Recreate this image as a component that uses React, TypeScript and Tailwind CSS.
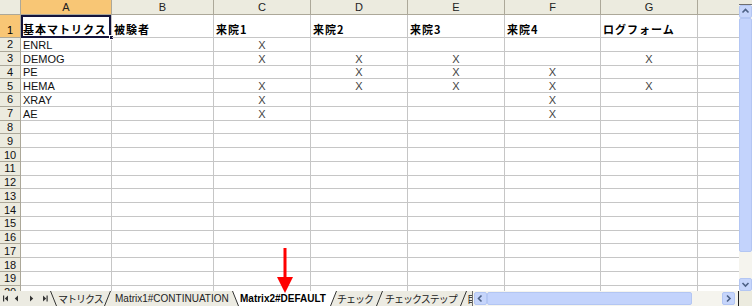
import React from "react";

const cols = [
  { key: "A", w: "w-[91px]" },
  { key: "B", w: "w-[102px]" },
  { key: "C", w: "w-[97px]" },
  { key: "D", w: "w-[97px]" },
  { key: "E", w: "w-[97px]" },
  { key: "F", w: "w-[96px]" },
  { key: "G", w: "w-[97px]" },
];

const headers: Record<string, string> = {
  A: "基本マトリクス",
  B: "被験者",
  C: "来院1",
  D: "来院2",
  E: "来院3",
  F: "来院4",
  G: "ログフォーム",
};

const data: Record<number, { name: string; marks: string[] }> = {
  2: { name: "ENRL", marks: ["C"] },
  3: { name: "DEMOG", marks: ["C", "D", "E", "G"] },
  4: { name: "PE", marks: ["D", "E", "F"] },
  5: { name: "HEMA", marks: ["C", "D", "E", "F", "G"] },
  6: { name: "XRAY", marks: ["C", "F"] },
  7: { name: "AE", marks: ["C", "F"] },
};

const rows = Array.from({ length: 19 }, (_, i) => i + 2);

const sans = "font-['Liberation_Sans','Noto_Sans_CJK_JP',sans-serif]";
const jp = "font-['Noto_Sans_CJK_JP',sans-serif]";

const Slant = ({ dir, active }: { dir: "back" | "fwd"; active?: boolean }) => (
  <svg width="7" height="15" className="shrink-0">
    {dir === "back" ? (
      <>
        {active && <polygon points="0.5,0 7,0 7,15 6.5,15" fill="#ffffff" />}
        <line x1="0.5" y1="0" x2="6.5" y2="15" stroke="#333" strokeWidth="1" />
      </>
    ) : (
      <>
        {active && <polygon points="0,0 6.5,0 0.5,15 0,15" fill="#ffffff" />}
        <line x1="6.5" y1="0" x2="0.5" y2="15" stroke="#333" strokeWidth="1" />
      </>
    )}
  </svg>
);

const ScrollBtn = ({ dir }: { dir: "up" | "down" | "left" | "right" }) => {
  const d =
    dir === "up"
      ? "M3.5 7.5 L6.5 4.5 L9.5 7.5"
      : dir === "down"
      ? "M3.5 5 L6.5 8 L9.5 5"
      : dir === "left"
      ? "M7.5 3.5 L4.5 6.5 L7.5 9.5"
      : "M5 3.5 L8 6.5 L5 9.5";
  return (
    <div className="w-[13px] h-[13px] shrink-0 rounded-[2px] bg-[#c6d5fb] border border-[#b3c6f3] flex items-center justify-center">
      <svg width="13" height="13" className="shrink-0">
        <path d={d} fill="none" stroke="#4d6185" strokeWidth="1.6" />
      </svg>
    </div>
  );
};

export default function App() {
  return (
    <div className={`relative w-[752px] h-[306px] overflow-hidden bg-white flex flex-col ${sans}`}>
      <div className="flex h-[291px] shrink-0">
        <div className="flex-1 overflow-hidden flex flex-col">
          {/* column headers */}
          <div className="flex h-[15px] shrink-0 text-[11px] leading-[14px] text-[#222]">
            <div className="w-[21px] shrink-0 bg-[#ecebdf] border-r border-b border-[#aca899]" />
            {cols.map((c) => (
              <div
                key={c.key}
                className={`${c.w} shrink-0 text-center border-r border-b border-[#aca899] ${
                  c.key === "A" ? "bg-[#f8c675]" : "bg-[#ecebdf]"
                }`}
              >
                {c.key}
              </div>
            ))}
            <div className="flex-1 bg-[#ecebdf] border-b border-[#aca899]" />
          </div>

          {/* row 1 */}
          <div className="flex h-[23px] shrink-0">
            <div className="w-[21px] shrink-0 bg-[#f8c675] border-r border-b border-[#aca899] text-[11px] flex items-end justify-center leading-[13px]">
              1
            </div>
            {cols.map((c) => (
              <div
                key={c.key}
                className={`${c.w} shrink-0 relative border-r border-b border-[#c6c6c6] flex items-end pl-[2px] pb-[1px] ${jp} font-bold text-[11px] tracking-[1px] leading-[13px] text-black whitespace-nowrap`}
              >
                {headers[c.key]}
                {c.key === "A" && (
                  <>
                    <div className="absolute left-0 top-0 right-0 -bottom-px border-2 border-[#14143c]" />
                    <div className="absolute -right-[3px] -bottom-[3px] w-[5px] h-[5px] bg-[#14143c] border border-white" />
                  </>
                )}
              </div>
            ))}
            <div className="flex-1 border-b border-[#c6c6c6]" />
          </div>

          {rows.map((r) => {
            const row = data[r];
            return (
              <div key={r} className="flex h-[13.78px] shrink-0 text-[11px] leading-[12px]">
                <div className="w-[21px] shrink-0 bg-[#ecebdf] border-r border-b border-[#aca899] flex items-center justify-center text-[#111]">
                  {r}
                </div>
                {cols.map((c) => {
                  let content = "";
                  if (row) {
                    if (c.key === "A") content = row.name;
                    else if (row.marks.includes(c.key)) content = "X";
                  }
                  return (
                    <div
                      key={c.key}
                      className={`${c.w} shrink-0 border-r border-b border-[#c6c6c6] flex items-end ${
                        c.key === "A" ? "pl-[2px] text-[#111]" : "justify-center text-[#444]"
                      }`}
                    >
                      {content}
                    </div>
                  );
                })}
                <div className="flex-1 border-b border-[#c6c6c6]" />
              </div>
            );
          })}
        </div>

        {/* vertical scrollbar */}
        <div className="w-[13px] shrink-0 flex flex-col bg-[#f5f4ee]">
          <div className="h-[5px] shrink-0 bg-[#ecebdf] border-b border-[#6f6f6f]" />
          <ScrollBtn dir="up" />
          <div className="h-[234px] shrink-0 rounded-[2px] bg-[#c3d3fc] border border-[#b3c6f3]" />
          <div className="flex-1" />
          <ScrollBtn dir="down" />
        </div>
      </div>

      {/* sheet tabs */}
      <div className="flex h-[15px] shrink-0 bg-[#ecebe2] text-[#222]">
        <svg width="50" height="15" className="shrink-0">
          <rect x="3" y="4.5" width="1.2" height="6" fill="#333" />
          <polygon points="8,4.5 4.8,7.5 8,10.5" fill="#333" />
          <polygon points="18,4.5 14.8,7.5 18,10.5" fill="#333" />
          <polygon points="30,4.5 33.2,7.5 30,10.5" fill="#333" />
          <polygon points="43,4.5 46.2,7.5 43,10.5" fill="#333" />
          <rect x="46.5" y="4.5" width="1.2" height="6" fill="#333" />
        </svg>
        <Slant dir="back" />
        <div className={`w-[47px] shrink-0 flex items-center pl-[1px] ${jp} text-[10px] tracking-[-1px] whitespace-nowrap`}>
          マトリクス
        </div>
        <Slant dir="fwd" />
        <div className="w-[121px] shrink-0 flex items-center pl-[4px] text-[10px] whitespace-nowrap">
          Matrix1#CONTINUATION
        </div>
        <Slant dir="back" active />
        <div className="w-[91px] shrink-0 flex items-center pl-[1px] bg-white text-[10px] font-bold text-black whitespace-nowrap">
          Matrix2#DEFAULT
        </div>
        <Slant dir="fwd" active />
        <div className={`w-[39px] shrink-0 flex items-center ${jp} text-[10px] tracking-[-1px] whitespace-nowrap`}>
          チェック
        </div>
        <Slant dir="fwd" />
        <div className={`w-[77px] shrink-0 flex items-center pl-[2px] ${jp} text-[10px] tracking-[-1px] whitespace-nowrap`}>
          チェックステップ
        </div>
        <Slant dir="fwd" />
        <div className={`w-[5px] shrink-0 overflow-hidden flex items-center ${jp} text-[10px] whitespace-nowrap`}>
          目
        </div>

        {/* horizontal scrollbar */}
        <div className="flex-1 flex items-center border-l border-[#6f6f6f] bg-[#f5f4ee] pl-px">
          <ScrollBtn dir="left" />
          <div className="w-[205px] h-[13px] shrink-0 rounded-[2px] bg-[#c3d3fc] border border-[#b3c6f3]" />
          <div className="flex-1" />
          <ScrollBtn dir="right" />
          <div className="w-[3px] shrink-0" />
          <div className="w-px h-full shrink-0 bg-[#222]" />
        </div>
        <div className="w-[13px] shrink-0 bg-[#ecebdf]" />
      </div>

      {/* red arrow marker */}
      <svg width="16" height="46" className="absolute left-[277px] top-[248px]">
        <rect x="6.5" y="0" width="3" height="31" fill="#ff0000" />
        <polygon points="0,29 16,29 8,45" fill="#ff0000" />
      </svg>
    </div>
  );
}
